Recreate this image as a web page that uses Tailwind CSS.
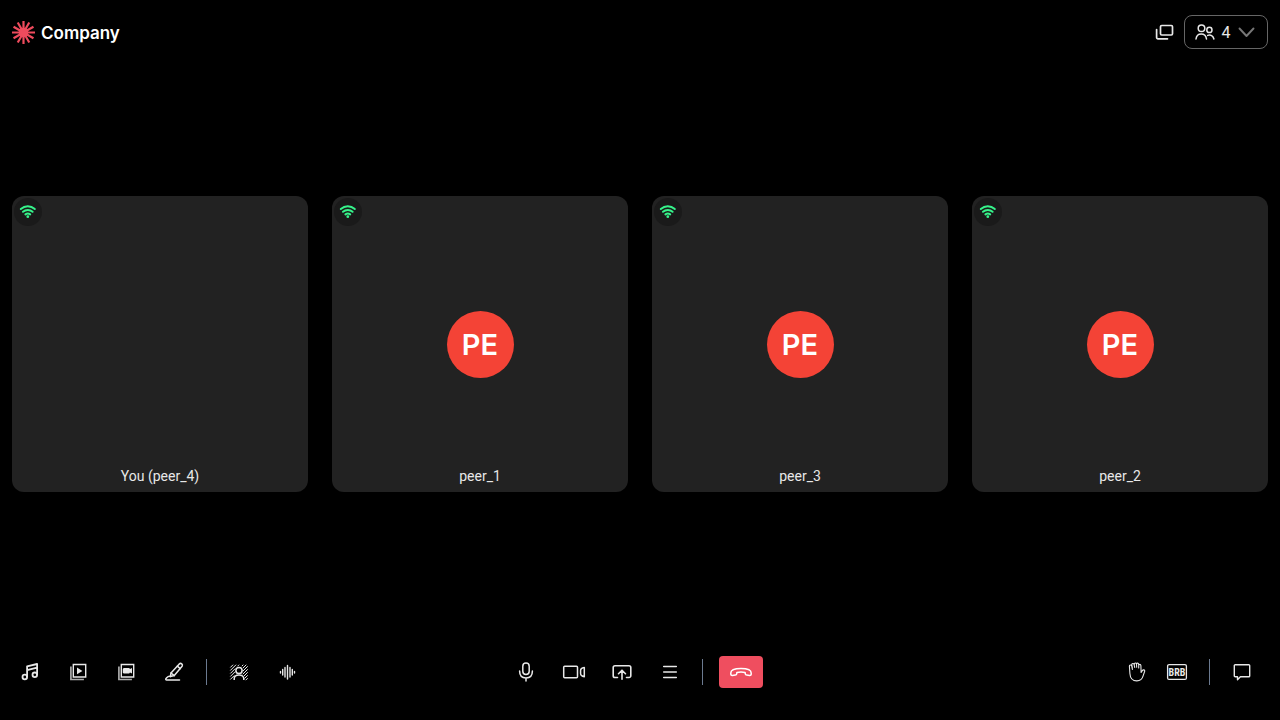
<!DOCTYPE html>
<html lang="en">
<head>
<meta charset="utf-8">
<meta name="viewport" content="width=device-width, initial-scale=1">
<title>Company meeting</title>
<script src="https://cdn.jsdelivr.net/npm/@tailwindcss/browser@4"></script>
</head>
<body class="flex min-h-screen flex-col bg-black font-['Roboto',sans-serif] text-[#e8e8e8]">
<svg class="hidden" aria-hidden="true">
  <symbol id="wifi" viewBox="0 0 18 18"><g fill="none" stroke="#36f28a" stroke-width="2" stroke-linecap="round"><path d="M1.800 6C6 2.200 11.600 2.200 15.800 6M4 8.800c2.700-2.400 6.900-2.400 9.600 0M6.400 11.400c1.400-1.100 3.400-1.100 4.800 0"/></g><circle cx="8.800" cy="13.700" r="1.400" fill="#36f28a"/></symbol>
</svg>
<header class="flex h-16 items-center justify-between px-3">
  <a href="#" class="flex items-center gap-1.5 font-['Inter',sans-serif] text-[17px] font-semibold text-white">
    <svg class="size-[23px]" viewBox="-12 -12 24 24" fill="none" stroke="#ef4b5d" stroke-width="2.300"><circle r="5" fill="#ef4b5d" stroke="none"/><path d="M0-12V12M-12 0H12M-6-10.400 6 10.400M-10.400-6 10.400 6M-10.400 6 10.400-6M-6 10.400 6-10.400"/></svg>
    <span class="pt-0.5 leading-6">Company</span>
  </a>
  <div class="flex items-center gap-2">
    <button type="button" aria-label="Picture in picture" class="flex size-6 items-center justify-center">
      <svg class="size-6" viewBox="0 0 24 24" fill="none" stroke="currentColor" stroke-width="1.700" stroke-linecap="round" stroke-linejoin="round"><rect x="8.500" y="5.500" width="12" height="9.500" rx="1.200"/><path d="M4.600 9.500v8a1.300 1.300 0 0 0 1.300 1.300h9.600"/></svg>
    </button>
    <button type="button" aria-label="4 participants" class="flex h-[34px] w-[84px] items-center justify-between rounded-lg border border-[#666] px-2.5">
      <svg class="size-5" viewBox="0 0 20 20" fill="none" stroke="currentColor" stroke-width="1.500" stroke-linecap="round"><circle cx="6.500" cy="6.300" r="3.300"/><circle cx="14.400" cy="7.900" r="2.600"/><path d="M1 17c.4-3.300 2.400-5 5.200-5s4.900 1.700 5.300 5M12.700 13.400c2.900-1 5.500.5 6.200 3.600"/></svg>
      <span class="pt-0.5 text-base leading-6">4</span>
      <svg class="size-5" viewBox="0 0 20 20" fill="none" stroke="#777" stroke-width="1.900" stroke-linecap="round" stroke-linejoin="round"><path d="m2.500 6.500 7 7.500 7-7.500"/></svg>
    </button>
  </div>
</header>

<main class="grid flex-1 grid-cols-4 items-center gap-6 px-3 text-sm">
  <article class="relative aspect-square rounded-xl bg-[#222]">
    <div class="absolute left-0.5 top-0.5 flex size-7 items-center justify-center rounded-full bg-[#1a1a1a]"><svg class="size-[18px]"><use href="#wifi"/></svg></div>
    <p class="absolute inset-x-0 bottom-1 text-center leading-6">You (peer_4)</p>
  </article>
  <article class="relative flex aspect-square items-center justify-center rounded-xl bg-[#222]">
    <div class="absolute left-0.5 top-0.5 flex size-7 items-center justify-center rounded-full bg-[#1a1a1a]"><svg class="size-[18px]"><use href="#wifi"/></svg></div>
    <div class="flex size-[67px] items-center justify-center rounded-full bg-[#f44336] pt-0.5 font-['Inter',sans-serif] text-[29px] font-semibold text-white">PE</div>
    <p class="absolute inset-x-0 bottom-1 text-center leading-6">peer_1</p>
  </article>
  <article class="relative flex aspect-square items-center justify-center rounded-xl bg-[#222]">
    <div class="absolute left-0.5 top-0.5 flex size-7 items-center justify-center rounded-full bg-[#1a1a1a]"><svg class="size-[18px]"><use href="#wifi"/></svg></div>
    <div class="flex size-[67px] items-center justify-center rounded-full bg-[#f44336] pt-0.5 font-['Inter',sans-serif] text-[29px] font-semibold text-white">PE</div>
    <p class="absolute inset-x-0 bottom-1 text-center leading-6">peer_3</p>
  </article>
  <article class="relative flex aspect-square items-center justify-center rounded-xl bg-[#222]">
    <div class="absolute left-0.5 top-0.5 flex size-7 items-center justify-center rounded-full bg-[#1a1a1a]"><svg class="size-[18px]"><use href="#wifi"/></svg></div>
    <div class="flex size-[67px] items-center justify-center rounded-full bg-[#f44336] pt-0.5 font-['Inter',sans-serif] text-[29px] font-semibold text-white">PE</div>
    <p class="absolute inset-x-0 bottom-1 text-center leading-6">peer_2</p>
  </article>
</main>

<footer class="grid h-24 grid-cols-[1fr_auto_1fr] items-center pl-[14px] pr-[21px]">
  <div class="flex items-center gap-4">
    <button type="button" aria-label="Music" class="flex size-8 items-center justify-center">
      <svg class="size-6" viewBox="0 0 24 24" fill="none" stroke="currentColor" stroke-width="1.800" stroke-linejoin="round"><circle cx="6.800" cy="17" r="2.300"/><circle cx="16.800" cy="14.800" r="2.300"/><path d="M9.100 17V6.300L19.100 4v10.800M9.100 10.200l10-2.500"/></svg>
    </button>
    <button type="button" aria-label="Media library" class="flex size-8 items-center justify-center">
      <svg class="size-6" viewBox="0 0 24 24" fill="none" stroke="currentColor" stroke-width="1.400"><path d="M7.300 4.500h12.400v12.500H7.300z"/><path d="M4.900 6.500v13h13" stroke="#aaa" stroke-width="1.700"/><path d="m11 7.500 5.400 3.400-5.400 3.400z" fill="currentColor" stroke="none"/></svg>
    </button>
    <button type="button" aria-label="Video library" class="flex size-8 items-center justify-center">
      <svg class="size-6" viewBox="0 0 24 24" fill="none" stroke="currentColor" stroke-width="1.400"><path d="M7.300 4.500h12.400v12.500H7.300z"/><path d="M4.900 6.500v13h13" stroke="#aaa" stroke-width="1.700"/><path d="M9.700 8h5.500l.8 1 2-1v5.600l-2-1-.8 1H9.700l-.9-.9V8.900z" fill="currentColor" stroke="none"/></svg>
    </button>
    <button type="button" aria-label="Whiteboard" class="flex size-8 items-center justify-center">
      <svg class="size-6" viewBox="0 0 24 24" fill="none" stroke="currentColor" stroke-width="1.500" stroke-linecap="round" stroke-linejoin="round"><path d="M9 13 17.300 3.900c1.700-1.400 3.900.6 2.800 2.400l-7.800 9.300-3.900.9z"/><path d="m9 13 3.300 2.600M15.300 6.200l3 2.400M8.400 16.500c-1.900-1.100-2.800.4-4.400 2-.6.7-.2 1.400.6 1.400h12.900"/></svg>
    </button>
    <span class="h-[26px] w-px bg-[#6b7a90]"></span>
    <button type="button" aria-label="Virtual background" class="flex size-8 items-center justify-center">
      <svg class="size-6" viewBox="0 0 24 24" fill="none" stroke="currentColor" stroke-width="1.500"><path stroke-width="1" d="M3.300 7.500 6.100 4.700M3.300 10.500l5.800-5.800M3.300 13.500l5-5M3.300 16.500l5-5M3.300 19.500l4-4M14.800 6.200l1.500-1.500M15.900 8.100l3.400-3.400M16 11l4.700-4.700M15.800 14.200l4.900-4.900M17 16l3.700-3.700M17.500 18.500l3.200-3.200M18.700 20.200l2-2M10.500 6.300l1.600-1.600"/><circle cx="12" cy="10.500" r="3.100"/><path d="M7.200 20v-1.200c0-5 9.600-5 9.600 0V20"/></svg>
    </button>
    <button type="button" aria-label="Noise reduction" class="flex size-8 items-center justify-center">
      <svg class="size-6" viewBox="0 0 24 24" fill="none" stroke="currentColor" stroke-width="1.400" stroke-linecap="round"><path d="M5.500 11.500v1.500M7.700 9.500v5.500M10 7.500v9.500M12.500 5.500v13.500M15 7.500v9.500M17.300 9.500v5.500M19.500 11.500v1.500"/></svg>
    </button>
  </div>

  <div class="flex items-center gap-4">
    <button type="button" aria-label="Microphone" class="flex size-8 items-center justify-center">
      <svg class="size-6" viewBox="0 0 24 24" fill="none" stroke="currentColor" stroke-width="1.500" stroke-linecap="round"><rect x="8.800" y="3" width="6.400" height="11.500" rx="3.200"/><path d="M5.600 11c0 4.200 2.300 7 6.400 7s6.400-2.800 6.400-7M12 18v3"/></svg>
    </button>
    <button type="button" aria-label="Camera" class="flex size-8 items-center justify-center">
      <svg class="size-6" viewBox="0 0 24 24" fill="none" stroke="currentColor" stroke-width="1.500" stroke-linejoin="round"><rect x="1.700" y="6.300" width="13.800" height="11.400" rx="1"/><path d="M22.300 7.500v9.200c-2.300-.3-3.700-1.700-3.700-3.100v-3c0-1.400 1.400-2.800 3.700-3.100z"/></svg>
    </button>
    <button type="button" aria-label="Share screen" class="flex size-8 items-center justify-center">
      <svg class="size-6" viewBox="0 0 24 24" fill="none" stroke="currentColor" stroke-width="1.600" stroke-linecap="round" stroke-linejoin="round"><path d="M7.500 17.500H5a1.800 1.800 0 0 1-1.800-1.800V7.600A1.800 1.800 0 0 1 5 5.800h14a1.800 1.800 0 0 1 1.800 1.800v8.100a1.800 1.800 0 0 1-1.800 1.800h-2.500M12 19.300v-9M8.500 13.700l3.500-3.500 3.500 3.500"/></svg>
    </button>
    <button type="button" aria-label="More options" class="flex size-8 items-center justify-center">
      <svg class="size-6" viewBox="0 0 24 24" fill="none" stroke="currentColor" stroke-width="1.500" stroke-linecap="round"><path d="M5.700 6.400h12.600M5.700 12h12.600M5.700 17.600h12.600"/></svg>
    </button>
    <span class="h-[26px] w-px bg-[#6b7a90]"></span>
    <button type="button" aria-label="Leave call" class="flex h-8 w-11 items-center justify-center rounded bg-[#ef4e5f] text-white">
      <svg class="size-6" viewBox="0 0 24 24" fill="none" stroke="currentColor" stroke-width="1.500" stroke-linejoin="round"><path d="M1.800 13c0-2.700 4-4.500 10.200-4.500s10.200 1.800 10.200 4.500v1c0 1-.6 1.500-1.600 1.400l-2.900-.3c-.9-.1-1.300-.6-1.400-1.300l-.2-1.400c-2.600-.5-5.600-.5-8.200 0l-.2 1.400c-.1.700-.5 1.200-1.400 1.300l-2.900.3c-1 .1-1.600-.4-1.600-1.400z"/></svg>
    </button>
  </div>

  <div class="flex items-center justify-end gap-4 pr-px">
    <div class="flex gap-2">
      <button type="button" aria-label="Raise hand" class="flex size-8 items-center justify-center">
        <svg class="size-6" viewBox="0 0 24 24" fill="none" stroke="currentColor" stroke-width="1.100" stroke-linecap="round" stroke-linejoin="round"><path d="M7.400 9.500 6.700 6c-.4-1.400-2.400-1.200-2.300.3l.5 7.200c.3 4.800 2.700 7.400 6.900 7.400 3.600 0 5.500-2 6.300-5l1.600-4.600c.4-1.500-1.600-2-2.400-.7l-1.200 1.900-.2-7c-.1-1.500-2.200-1.500-2.200 0v2.500M7.400 8l-.6-3.300c-.2-1.500 1.900-1.700 2.300-.3l.6 3M9.300 4.700c-.4-2 1.900-2.300 2.200-.6l.2 3.100M11.500 4.200c.2-1.700 2.200-1.400 2.200.5"/></svg>
      </button>
      <button type="button" aria-label="Be right back" class="flex size-8 items-center justify-center">
        <svg class="size-6" viewBox="0 0 24 24" fill="none" stroke="currentColor" stroke-width="1.300"><rect x="2.600" y="4.600" width="18.800" height="14.800" rx="1.500"/><text x="12" y="15.700" text-anchor="middle" fill="currentColor" stroke="none" class="font-['Liberation_Sans_Narrow','Roboto_Condensed','Roboto',sans-serif] text-[10px] font-bold">BRB</text></svg>
      </button>
    </div>
    <span class="h-[26px] w-px bg-[#6b7a90]"></span>
    <button type="button" aria-label="Chat" class="flex size-8 items-center justify-center">
      <svg class="size-6" viewBox="0 0 24 24" fill="none" stroke="currentColor" stroke-width="1.400" stroke-linejoin="round"><path d="M5.200 4.700h13.600c.5 0 .9.400.9.900v10.300c0 .5-.4.900-.9.900h-8.400L7.500 19.700v-2.900H5.200c-.5 0-.9-.4-.9-.9V5.600c0-.5.4-.9.9-.9z"/></svg>
    </button>
  </div>
</footer>
</body>
</html>
